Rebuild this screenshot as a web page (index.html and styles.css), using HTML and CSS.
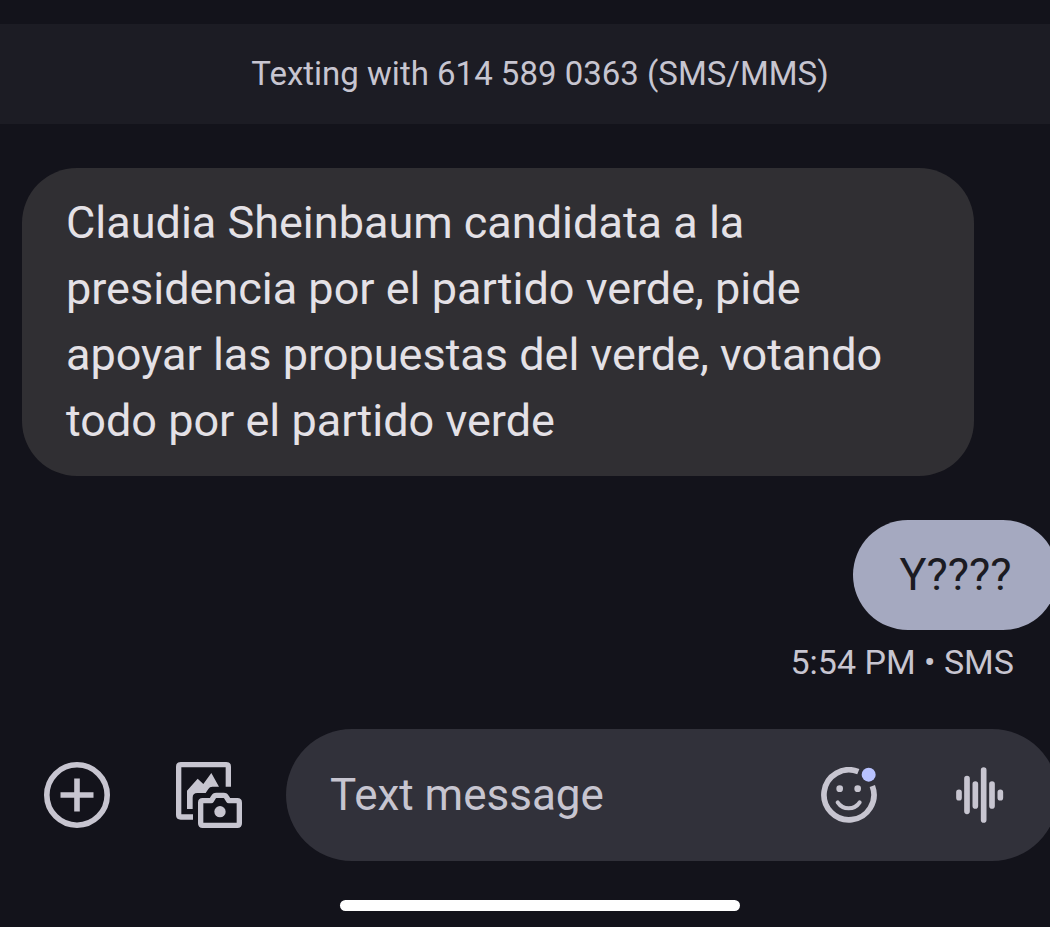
FILE: index.html
```html
<!DOCTYPE html>
<html lang="en">
<head>
    <meta charset="UTF-8">
    <meta name="viewport" content="width=device-width, initial-scale=1.0">
    <title>Messages</title>
    <link rel="stylesheet" href="styles.css">
</head>
<body>
    <div class="screen">
        <header class="banner">Texting with 614 589 0363 (SMS/MMS)</header>

        <main class="thread">
            <p class="bubble incoming">Claudia Sheinbaum candidata a la presidencia por el partido verde, pide apoyar las propuestas del verde, votando todo por el partido verde</p>
            <p class="bubble outgoing">Y????</p>
            <p class="status">5:54 PM • SMS</p>
        </main>

        <form class="compose">
            <button class="icon-button" type="button" aria-label="Add">
                <svg width="66" height="66" viewBox="0 0 66 66" fill="none" stroke="currentColor">
                    <circle cx="33" cy="33" r="30.2" stroke-width="5.6"/>
                    <path d="M33 16.5v33M16.5 33h33" stroke-width="5.6"/>
                </svg>
            </button>
            <button class="icon-button" type="button" aria-label="Gallery and camera">
                <svg width="66" height="66" viewBox="0 0 198 198" fill="none" stroke="currentColor" stroke-width="16" stroke-linejoin="round">
                    <path d="M157 74V14q0-6-6-6H14q-6 0-6 6v145q0 6 6 6h37"/>
                    <path d="M33 141V86L65 50l17 16 24-33 23 41h-20q-8 0-12 7l-8 12H64q-14 0-14 14v34z" fill="currentColor" stroke="none"/>
                    <path d="M80 116h26l6-10q3-6 9-6h22q6 0 9 6l6 10h26q6 0 6 6v62q0 6-6 6H80q-6 0-6-6v-62q0-6 6-6z"/>
                    <circle cx="132" cy="149" r="17" fill="currentColor" stroke="none"/>
                </svg>
            </button>

            <div class="field">
                <input class="message-input" type="text" placeholder="Text message" aria-label="Text message">
                <button class="icon-button" type="button" aria-label="Emoji">
                    <svg width="56" height="56" viewBox="0 0 168 168" fill="none" stroke="currentColor">
                        <path d="M154 57A75 75 0 1 1 112 14" stroke-width="17"/>
                        <path d="M50 106q12 18 33 18t33-18" stroke-width="12" stroke-linecap="round"/>
                        <circle cx="56" cy="65" r="10" fill="currentColor" stroke="none"/>
                        <circle cx="110" cy="65" r="10" fill="currentColor" stroke="none"/>
                        <circle cx="143" cy="23" r="21" fill="#b9c3ff" stroke="none"/>
                    </svg>
                </button>
                <button class="icon-button" type="button" aria-label="Record voice message">
                    <svg width="48" height="56" viewBox="0 0 144 168" fill="none" stroke="currentColor" stroke-width="17" stroke-linecap="round">
                        <path d="M9 76v16M33 35v98M58 51v66M83 9v150M108 51v66M133 76v16"/>
                    </svg>
                </button>
            </div>
        </form>

        <div class="home-bar"></div>
    </div>
</body>
</html>
```

FILE: styles.css
```css
body {
    margin: 0;
    overflow-x: hidden;
    background-color: #13131b;
    color: #c7c5d0;
    font-family: Roboto, "Noto Sans", sans-serif;
}
/* a little wider than the window, runs off the right edge */
.screen {
    width: calc(100% + 30px);
    padding-top: 24px;
}
.banner {
    background-color: #1c1c24;
    font-size: 33px;
    line-height: 100px;
    text-align: center;
}
.thread {
    display: flex;
    flex-direction: column;
    gap: 44px;
    padding: 44px 22px;
}
.bubble {
    margin: 0;
    padding: 22px 44px;
    border-radius: 55px;
    font-size: 45px;
    line-height: 66px;
}
.incoming {
    align-self: flex-start;
    max-width: 864px;
    background-color: #302f33;
    color: #e4e1e6;
}
.outgoing {
    align-self: flex-end;
    min-width: 117px;
    background-color: #a5a9c0;
    color: #1b1b22;
    text-align: center;
}
.status {
    align-self: flex-end;
    margin: -34px 44px 0 0;
    font-size: 34px;
    line-height: 45px;
}
.compose {
    display: flex;
    align-items: center;
    gap: 44px;
    padding: 0 22px 0 44px;
}
.icon-button {
    display: block;
    flex: none;
    padding: 0;
    border: 0;
    background: none;
    color: inherit;
}
.icon-button svg {
    display: block;
}
.compose > .icon-button + .icon-button {
    margin-left: 22px;
}
.field {
    display: flex;
    flex: 1;
    align-items: center;
    gap: 79px;
    min-width: 0;
    height: 132px;
    padding: 0 54px 0 44px;
    box-sizing: border-box;
    border-radius: 66px;
    background-color: #31313a;
}
.message-input {
    flex: 1;
    width: 100%;
    min-width: 0;
    padding: 0;
    border: 0;
    outline: 0;
    background: none;
    color: inherit;
    font: inherit;
    font-size: 44px;
}
.message-input::placeholder {
    color: #c7c5d0;
    opacity: 1;
}
.home-bar {
    width: 37%;
    height: 11px;
    margin: 39px auto 16px;
    border-radius: 6px;
    background-color: #fff;
}
```
